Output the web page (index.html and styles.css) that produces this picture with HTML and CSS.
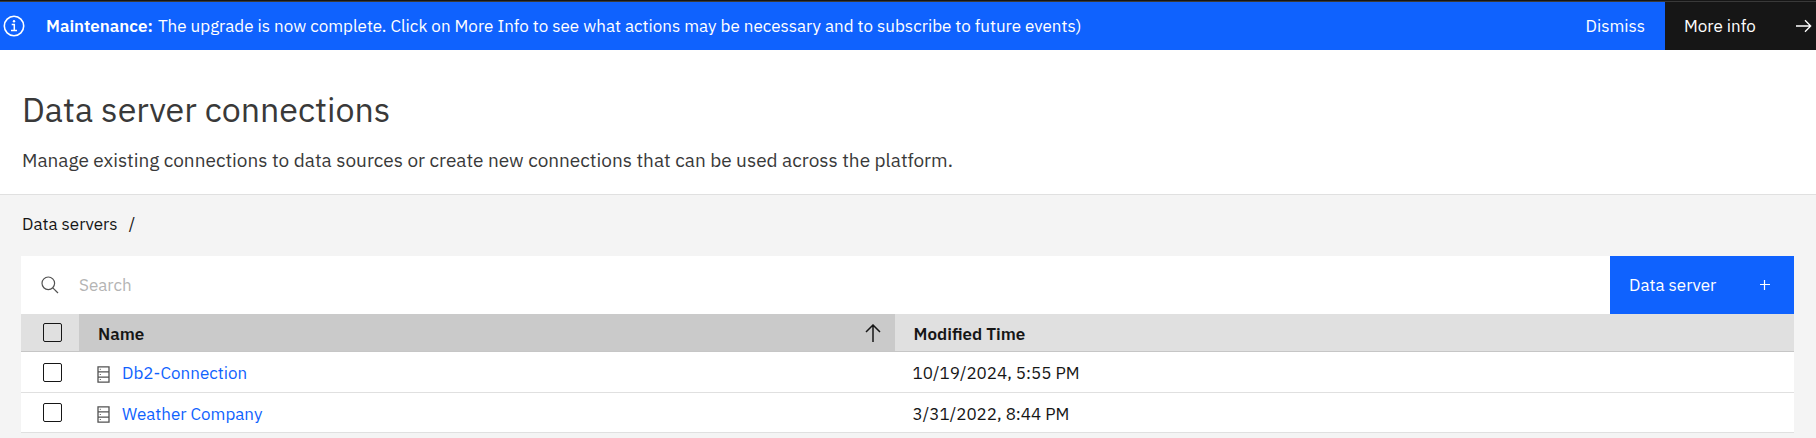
FILE: index.html
```html
<!DOCTYPE html>
<html lang="en">
<head>
<meta charset="utf-8">
<title>Data server connections</title>
<link rel="stylesheet" href="styles.css">
</head>
<body>
<aside class="banner">
  <svg class="banner-icon" viewBox="0 0 22 22" fill="none" stroke="currentColor" aria-hidden="true"><circle cx="11" cy="11" r="9.7" stroke-width="1.6"/><path d="M8.7 9.5h2.6v6M8 15.4h6" stroke-width="1.5"/><circle cx="11" cy="6.3" r="1.2" fill="currentColor" stroke="none"/></svg>
  <p class="banner-text"><strong>Maintenance:</strong> The upgrade is now complete. Click on More Info to see what actions may be necessary and to subscribe to future events)</p>
  <button class="dismiss" type="button">Dismiss</button>
  <button class="more" type="button">More info
    <svg class="arrow" viewBox="0 0 16 14" fill="none" stroke="currentColor" stroke-width="1.3" aria-hidden="true"><path d="M0 7h14.5M9 1.3 14.7 7 9 12.7"/></svg>
  </button>
</aside>
<header class="page-header">
  <h1 class="title">Data server connections</h1>
  <p class="subtitle">Manage existing connections to data sources or create new connections that can be used across the platform.</p>
</header>
<main class="content">
  <nav class="crumbs" aria-label="Breadcrumb"><a class="crumb" href="#">Data servers</a><span>/</span></nav>
  <div class="toolbar">
    <label class="search">
      <svg class="search-icon" viewBox="0 0 18 18" fill="none" stroke="currentColor" stroke-width="1.2" aria-label="Search"><circle cx="7.3" cy="7.3" r="6.3"/><path d="m11.8 11.8 5.2 5.2"/></svg>
      <input class="search-input" type="search" placeholder="Search">
    </label>
    <button class="add" type="button">Data server
      <svg class="plus" viewBox="0 0 10 10" stroke="currentColor" stroke-width="1.2" aria-hidden="true"><path d="M0 4.5h10M4.5 0v10"/></svg>
    </button>
  </div>
  <table class="servers">
    <thead>
      <tr>
        <th class="select"><input class="check" type="checkbox" aria-label="Select all"></th>
        <th class="name"><button class="sort" type="button"><span class="sort-label">Name</span>
          <svg class="sort-icon" viewBox="0 0 16 18" fill="none" stroke="currentColor" stroke-width="1.5" aria-hidden="true"><path d="M8 18V1.2M1 8l7-7 7 7"/></svg></button></th>
        <th class="time">Modified Time</th>
      </tr>
    </thead>
    <tbody>
      <tr>
        <td class="select"><input class="check" type="checkbox" aria-label="Select Db2-Connection"></td>
        <td><a class="server" href="#"><svg class="server-icon" viewBox="0 0 13 17" fill="none" stroke="currentColor" aria-hidden="true"><path stroke-width="1.3" d="M1 .8h11v15.4H1zM1 5.9h11M1 11.1h11"/><path d="M2.8 3.3h1M2.8 8.5h1M2.8 13.5h1"/></svg>Db2-Connection</a></td>
        <td>10/19/2024, 5:55 PM</td>
      </tr>
      <tr>
        <td class="select"><input class="check" type="checkbox" aria-label="Select Weather Company"></td>
        <td><a class="server" href="#"><svg class="server-icon" viewBox="0 0 13 17" fill="none" stroke="currentColor" aria-hidden="true"><path stroke-width="1.3" d="M1 .8h11v15.4H1zM1 5.9h11M1 11.1h11"/><path d="M2.8 3.3h1M2.8 8.5h1M2.8 13.5h1"/></svg>Weather Company</a></td>
        <td>3/31/2022, 8:44 PM</td>
      </tr>
    </tbody>
  </table>
</main>
</body>
</html>
```
FILE: styles.css
```css
* { box-sizing: border-box; }
body {
  display: flex;
  flex-direction: column;
  min-height: 100vh;
  margin: 0;
  border-top: 1px solid #161616;
  background: #f4f4f4;
  color: #161616;
  font: 17px/24px "IBM Plex Sans", "Noto Sans", sans-serif;
}
button, input { font: inherit; color: inherit; }
button { border: 0; background: none; text-align: left; cursor: pointer; }
h1, p { margin: 0; }
svg { flex: none; }

.banner {
  display: flex;
  align-items: stretch;
  min-height: 49px;
  border-top: 1px solid #393939;
  background: #0f62fe;
  color: #fff;
}
.banner-icon { align-self: center; width: 22px; height: 22px; margin: 0 21px 0 3px; }
.banner-text { flex: 1; align-self: center; }
.banner-text strong { margin-right: 1px; font-weight: 600; }
.dismiss { padding: 0 20px; }
.more {
  display: flex;
  align-items: center;
  justify-content: space-between;
  width: 151px;
  padding: 0 4px 0 19px;
  background: #161616;
}
.arrow { width: 16px; height: 14px; }

.page-header {
  padding: 37px 22px 20px;
  border-bottom: 1px solid #e0e0e0;
  background: #fff;
  color: #393939;
}
.title { margin-bottom: 15px; font-size: 34px; line-height: 44px; font-weight: 400; }
.subtitle { font-size: 19px; line-height: 28px; }

.content { padding: 17px 22px 0 21px; }
.crumbs { display: flex; gap: 11px; margin-bottom: 20px; padding-left: 1px; }
.crumb { color: inherit; text-decoration: none; }

.toolbar { display: flex; height: 58px; background: #fff; }
.search { display: flex; flex: 1; align-items: center; padding-left: 20px; }
.search-icon { width: 18px; height: 18px; margin-right: 20px; color: #525252; }
.search-input {
  flex: 1;
  padding: 0;
  border: 0;
  outline: 0;
  background: none;
  appearance: none;
}
.search-input::placeholder { color: #b4b4b4; opacity: 1; }
.add {
  display: flex;
  align-items: center;
  justify-content: space-between;
  width: 184px;
  padding: 0 24px 0 19px;
  background: #0f62fe;
  color: #fff;
}
.plus { width: 10px; height: 10px; }

.servers { width: 100%; border-collapse: separate; border-spacing: 0; table-layout: fixed; }
.servers th { height: 38px; padding: 2px 19px 0; border-bottom: 1px solid #c6c6c6; background: #e0e0e0; text-align: left; font-weight: 600; }
.servers td { height: 40px; padding: 2px 18px 0; border-bottom: 1px solid #e0e0e0; background: #fff; }
.servers tr:first-child td { height: 41px; }
.servers .select { width: 58px; padding: 0 0 0 22px; }
.servers .name { width: 46%; padding: 0; background: #cacaca; }
.sort { display: flex; align-items: center; justify-content: space-between; width: 100%; padding: 0 14px 0 19px; font-weight: 600; }
.sort-label { padding-top: 2px; }
.sort-icon { width: 16px; height: 18px; }
.check {
  display: block;
  width: 19px;
  height: 19px;
  margin: 0;
  border: 1px solid #161616;
  border-radius: 2px;
  appearance: none;
}
.server { display: flex; align-items: center; color: #0f62fe; text-decoration: none; }
.server-icon { width: 13px; height: 17px; margin: 2px 12px 0 0; color: #525252; }
```
